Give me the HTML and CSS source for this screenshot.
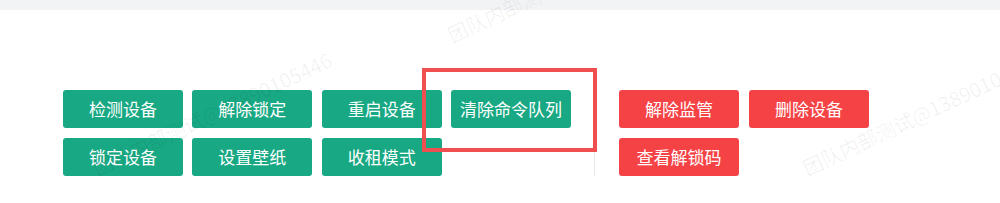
FILE: index.html
```html
<!DOCTYPE html>
<html lang="zh-CN">
<head>
<meta charset="utf-8">
<title>设备操作</title>
<link rel="stylesheet" href="styles.css">
</head>
<body>
<div class="topbar"></div>
<main class="content">
  <div class="actions">
    <div class="group group-green">
      <button class="btn btn-green">检测设备</button>
      <button class="btn btn-green">解除锁定</button>
      <button class="btn btn-green">重启设备</button>
      <button class="btn btn-green">清除命令队列</button>
      <button class="btn btn-green">锁定设备</button>
      <button class="btn btn-green">设置壁纸</button>
      <button class="btn btn-green">收租模式</button>
    </div>
    <div class="group group-red">
      <button class="btn btn-red">解除监管</button>
      <button class="btn btn-red">删除设备</button>
      <button class="btn btn-red">查看解锁码</button>
    </div>
  </div>
</main>
<div class="highlight"></div>
<div class="watermark wm-left">团队内部测试@13890105446</div>
<div class="watermark wm-top">团队内部测试@13890105446</div>
<div class="watermark wm-right">团队内部测试@13890105446</div>
</body>
</html>
```
FILE: styles.css
```css
html, body {
  margin: 0;
  padding: 0;
  background: #ffffff;
  font-family: "Noto Sans CJK SC", "Noto Sans", sans-serif;
  overflow: hidden;
}

.topbar {
  height: 10px;
  background: #f2f3f5;
}

.content {
  padding: 80px 0 0 63px;
}

.actions {
  display: flex;
  align-items: stretch;
}

.group {
  display: grid;
  grid-auto-rows: 38px;
  row-gap: 10px;
  align-content: start;
}

.group-green {
  grid-template-columns: repeat(4, 120px);
  column-gap: 9.33px;
  padding-right: 23px;
  border-right: 1px solid #e5e6eb;
}

.group-red {
  grid-template-columns: repeat(2, 120px);
  column-gap: 10px;
  padding-left: 24px;
}

.btn {
  border: none;
  border-radius: 3px;
  color: #ffffff;
  font-family: "Noto Sans CJK SC", "Noto Sans", sans-serif;
  font-size: 17px;
  line-height: 38px;
  padding: 0;
  margin: 0;
  text-align: center;
  cursor: pointer;
}

.btn-green {
  background: #18a883;
}

.btn-red {
  background: #f54245;
}

.highlight {
  position: absolute;
  left: 422px;
  top: 68px;
  width: 167px;
  height: 76px;
  border: 4px solid #f04f4f;
  pointer-events: none;
}

.watermark {
  position: absolute;
  font-family: "Noto Sans CJK SC", "Noto Sans", sans-serif;
  font-size: 20px;
  line-height: 20px;
  color: rgba(0, 0, 0, 0.06);
  white-space: nowrap;
  transform-origin: left bottom;
  transform: rotate(-25deg);
  pointer-events: none;
}

.wm-left {
  left: 98px;
  top: 158px;
}

.wm-top {
  left: 453px;
  top: 25px;
}

.wm-right {
  left: 808px;
  top: 158px;
}
```
